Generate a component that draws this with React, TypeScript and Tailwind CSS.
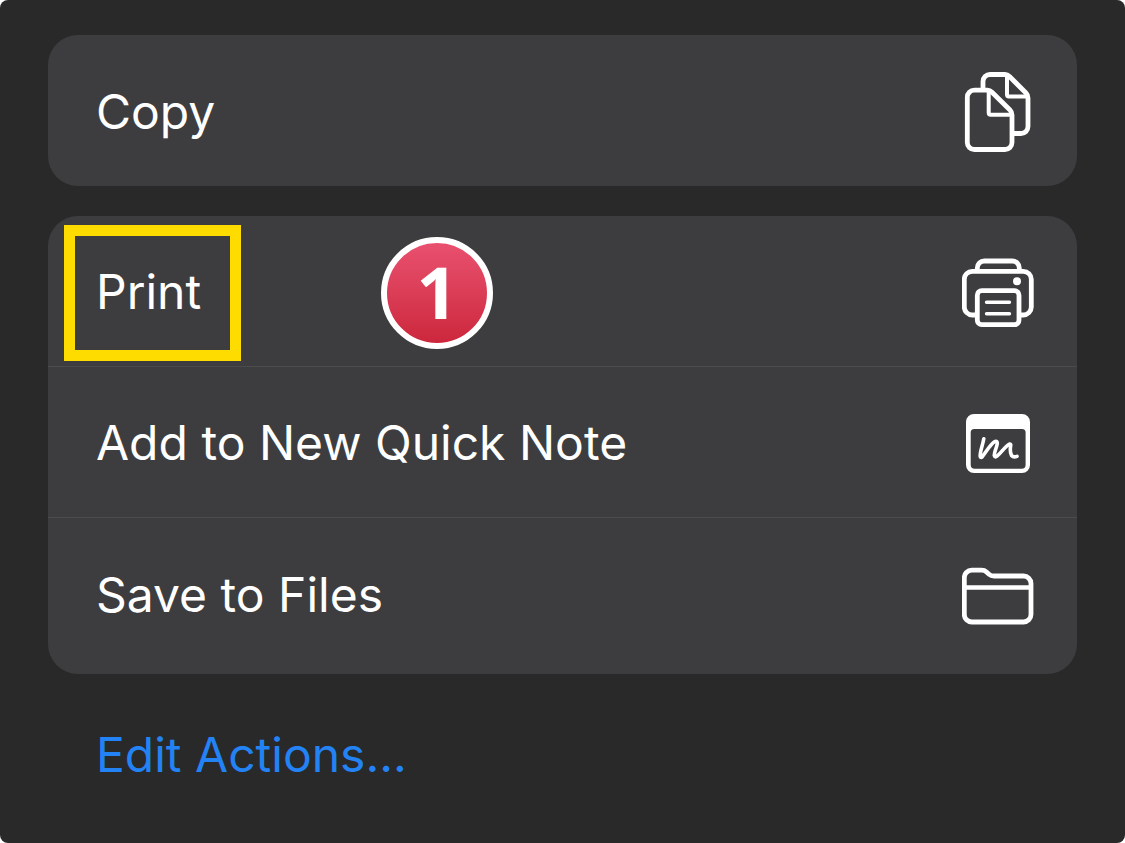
import type { ReactNode } from "react";

function Glyph({ children }: { children: ReactNode }) {
  return (
    <svg
      aria-hidden="true"
      viewBox="0 0 72 84"
      className="h-[84px] w-[72px] shrink-0"
      fill="none"
      stroke="currentColor"
      strokeWidth="4.8"
      strokeLinecap="round"
      strokeLinejoin="round"
    >
      {children}
    </svg>
  );
}

function CopyIcon() {
  return (
    <Glyph>
      <path d="M21 20V12.500a7 7 0 0 1 7-7h15q2.500 0 4.500 2L64 24q2 2 2 5v28.500a7 7 0 0 1-7 7h-7" strokeLinecap="butt" />
      <path d="M45 6v19.500q0 2 2 2h18" strokeWidth="4" />
      <path d="M12.300 21.200H25.500q2.500 0 4.500 2L48 41q2 2 2 5v27.500a7 7 0 0 1-7 7H12.300a7 7 0 0 1-7-7V28.200a7 7 0 0 1 7-7z" />
      <path d="M26.700 22v21.800q0 2 2 2H49" strokeWidth="4" />
    </Glyph>
  );
}

function PrintIcon() {
  return (
    <Glyph>
      <path d="M15.300 22V19a7 7 0 0 1 7-7h28a7 7 0 0 1 7 7v3" strokeLinecap="butt" />
      <path d="M15 66H10.300a8 8 0 0 1-8-8V30.300a8 8 0 0 1 8-8h51a8 8 0 0 1 8 8V58a8 8 0 0 1-8 8H57" strokeLinecap="butt" />
      <rect x="15.300" y="41.700" width="41.700" height="34" rx="4.500" />
      <path d="M24.500 53.300h23M24.500 64.700h23" strokeWidth="3.400" />
      <circle cx="55" cy="32.300" r="4" fill="currentColor" stroke="none" />
    </Glyph>
  );
}

function QuickNoteIcon() {
  return (
    <Glyph>
      <path
        fill="currentColor"
        stroke="none"
        fillRule="evenodd"
        d="M12 14h48a8 8 0 0 1 8 8v43a8 8 0 0 1-8 8H12a8 8 0 0 1-8-8V22a8 8 0 0 1 8-8zM12.200 29a3.500 3.500 0 0 0-3.500 3.500v32.200a4 4 0 0 0 4 4h46.900a4 4 0 0 0 4-4V32.500a3.500 3.500 0 0 0-3.500-3.500z"
      />
      <path
        strokeWidth="3.600"
        d="M21.800 38.800C20.800 45 17.800 52 18.200 56.500Q18.800 58.500 20.500 56.500C24.500 51.500 28.500 44 32.500 41.700Q35.800 40.500 35.200 44C34.500 48 32 52.500 32.300 55.500Q33 57.800 35 56.200C39.500 52.500 43 46.500 47.500 44Q49 43.800 48.700 45.500C48 49.500 48.300 53 49.500 55.500Q51.500 57.800 55 56.300"
      />
    </Glyph>
  );
}

function FolderIcon() {
  return (
    <Glyph>
      <path d="M2.300 26a7.500 7.500 0 0 1 7.500-7.800h9.700q3 0 5 1.800l2.500 2.200q2 1.800 5 1.800h29.500a7.500 7.500 0 0 1 7.500 7.500V62.500a7.500 7.500 0 0 1-7.500 7.500H9.800a7.500 7.500 0 0 1-7.500-7.500z" />
      <path d="M3 35.500h65" strokeWidth="4.400" strokeLinecap="butt" />
    </Glyph>
  );
}

function Action({ label, icon }: { label: string; icon: ReactNode }) {
  return (
    <button
      type="button"
      className="flex min-h-[151px] w-full items-center justify-between border-b border-[#4b4b4d] pr-[43px] pl-12 text-left last:border-b-0"
    >
      <span className="pt-0.5">{label}</span>
      {icon}
    </button>
  );
}

export default function App() {
  return (
    <div className="bg-white">
      <main className="min-h-screen rounded-lg bg-[#292929] px-12 pt-[35px] font-['Inter','Liberation_Sans',sans-serif] text-[48px] leading-[60px] text-white">
        <section className="overflow-hidden rounded-[30px] bg-[#3d3d3f]">
          <Action label="Copy" icon={<CopyIcon />} />
        </section>

        <section className="relative mt-[30px] overflow-hidden rounded-[30px] bg-[#3d3d3f] pb-[5px]">
          <div>
            <Action label="Print" icon={<PrintIcon />} />
            <Action label="Add to New Quick Note" icon={<QuickNoteIcon />} />
            <Action label="Save to Files" icon={<FolderIcon />} />
          </div>
          <div className="pointer-events-none absolute top-[9px] left-4 h-[136px] w-[177px] border-[11px] border-[#ffdc00]" />
          <div className="pointer-events-none absolute top-[21px] left-[333px] flex size-28 items-center justify-center rounded-full border-[6px] border-white bg-linear-to-b from-[#e9506f] to-[#cc263c] pb-1 font-['Open_Sans',sans-serif] text-[72px] leading-none font-bold">
            1
          </div>
        </section>

        <button type="button" className="mt-[51px] ml-12 block text-[#2383f4]">
          Edit Actions...
        </button>
      </main>
    </div>
  );
}
